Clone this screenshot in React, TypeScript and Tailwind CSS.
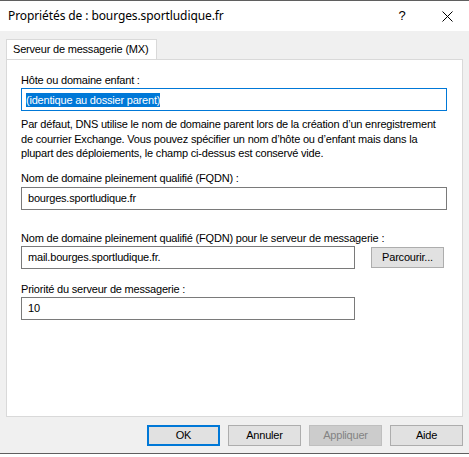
const ui = "font-['Liberation_Sans',Arial,sans-serif]";

function Field({ value, className = "" }: { value: string; className?: string }) {
  return (
    <div
      className={`h-[23px] border border-[#7a7a7a] bg-white px-[6px] flex items-center text-[11px] text-black ${className}`}
    >
      {value}
    </div>
  );
}

function Button({
  label,
  primary,
  disabled,
}: {
  label: string;
  primary?: boolean;
  disabled?: boolean;
}) {
  return (
    <div
      className={`w-[73px] h-[21px] flex items-center justify-center text-[11px] ${
        primary
          ? "border-2 border-[#0078d7] bg-[#e1e1e1] text-black"
          : disabled
          ? "border border-[#bfbfbf] bg-[#cccccc] text-[#838383]"
          : "border border-[#adadad] bg-[#e1e1e1] text-black"
      }`}
    >
      {label}
    </div>
  );
}

export default function App() {
  return (
    <div className={`w-[469px] h-[457px] bg-white flex flex-col tracking-[-0.2px] ${ui}`}>
      {/* Title bar */}
      <div className="border-t border-[#5f5f5f] h-[31px] bg-white flex items-center pl-[8px] pr-[16px]">
        <span className="flex-1 text-[12px] text-black font-['Noto_Sans',sans-serif] tracking-[-0.1px]">
          Propriétés de : bourges.sportludique.fr
        </span>
        <span className="text-[13px] text-black w-[10px] text-center mr-[35px]">?</span>
        <svg width="11" height="11" viewBox="0 0 11 11">
          <path d="M0.5 0.5 L10.5 10.5 M10.5 0.5 L0.5 10.5" stroke="#000" strokeWidth="1" />
        </svg>
      </div>

      {/* Body */}
      <div className="flex-1 bg-[#f0f0f0] flex flex-col px-[6px] pt-[8px]">
        {/* Tab */}
        <div className="flex">
          <div className="h-[20px] w-[151px] bg-white border border-b-0 border-[#d9d9d9] flex items-center pl-[6px] text-[11px] text-black">
            Serveur de messagerie (MX)
          </div>
        </div>
        {/* Panel */}
        <div className="h-[358px] bg-white border border-[#d9d9d9] px-[14px] pt-[13px] flex flex-col text-[11px] text-black">
          <div className="leading-[14px]">Hôte ou domaine enfant :</div>
          <div className="mt-[1px] h-[23px] w-[426px] border border-[#0078d7] bg-white px-[4px] flex items-center">
            <span className="bg-[#0078d7] text-white leading-[14px]">(identique au dossier parent)</span>
          </div>
          <p className="mt-[6px] leading-[14.5px] whitespace-nowrap">
            Par défaut, DNS utilise le nom de domaine parent lors de la création d’un enregistrement
            <br />
            de courrier Exchange. Vous pouvez spécifier un nom d’hôte ou d’enfant mais dans la
            <br />
            plupart des déploiements, le champ ci-dessus est conservé vide.
          </p>
          <div className="mt-[10px] leading-[14px]">Nom de domaine pleinement qualifié (FQDN) :</div>
          <Field value="bourges.sportludique.fr" className="mt-[2px] w-[426px]" />
          <div className="mt-[21px] leading-[14px]">
            Nom de domaine pleinement qualifié (FQDN) pour le serveur de messagerie :
          </div>
          <div className="mt-[1px] flex items-center">
            <Field value="mail.bourges.sportludique.fr." className="w-[334px]" />
            <div className="ml-[16px] w-[73px] h-[21px] border border-[#adadad] bg-[#e1e1e1] flex items-center justify-center">
              Parcourir...
            </div>
          </div>
          <div className="mt-[13px] leading-[14px]">Priorité du serveur de messagerie :</div>
          <Field value="10" className="mt-[1px] w-[334px]" />
        </div>

        {/* Buttons */}
        <div className="mt-[8px] flex justify-end gap-[8px]">
          <Button label="OK" primary />
          <Button label="Annuler" />
          <Button label="Appliquer" disabled />
          <Button label="Aide" />
        </div>
      </div>
      <div className="h-[4px] border-t border-[#5f5f5f] bg-white" />
    </div>
  );
}
